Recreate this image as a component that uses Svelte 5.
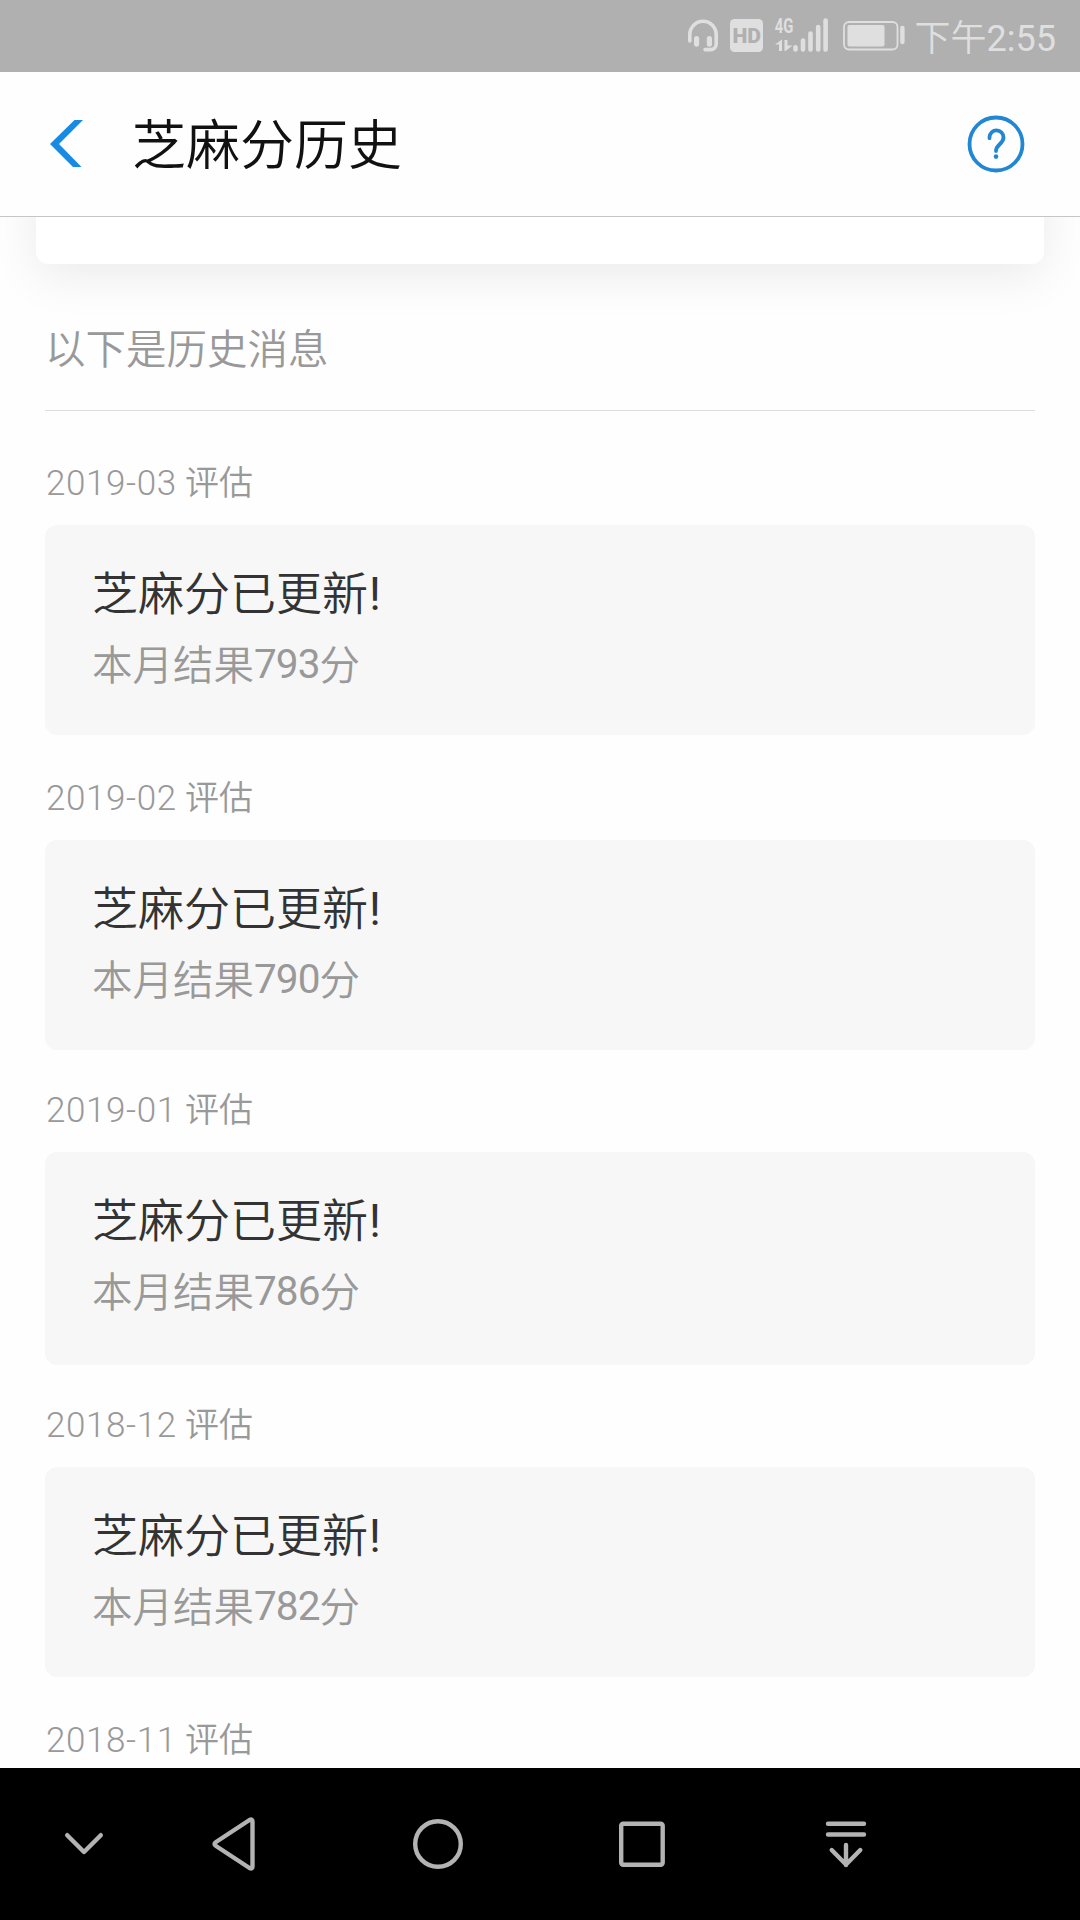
<script>
  const records = [
    { month: '2019-03', score: 793 },
    { month: '2019-02', score: 790 },
    { month: '2019-01', score: 786, tight: true, tall: true },
    { month: '2018-12', score: 782, tight: true },
    { month: '2018-11', score: null }
  ];
</script>

<svelte:head><title>芝麻分历史</title></svelte:head>

<div class="screen">
  <div class="status-bar">
    <svg class="status-icons" width="220" height="40" viewBox="0 0 220 40">
      <!-- headset -->
      <g fill="none" stroke="#dfdfdf" stroke-width="3.6" stroke-linecap="round">
        <path d="M4.8 25V18.5a13.2 13.2 0 0 1 26.4 0V28a5.6 5.6 0 0 1-5.6 5.6H20" />
        <path d="M11.6 22.5v5.6M24.4 22.5v5.6" stroke-width="5.2" />
      </g>
      <rect x="45" y="3" width="33" height="33" rx="4.5" fill="#dfdfdf" />
      <text class="hd" x="47.5" y="27" textLength="28.5" lengthAdjust="spacingAndGlyphs">HD</text>
      <text class="net" x="89.8" y="16.6" textLength="18.6" lengthAdjust="spacingAndGlyphs">4G</text>
      <!-- up / down traffic -->
      <path d="M97 23.5V35h-3v-6.5h-4zM99.500 24h3v5.500h5l-7 5.500h-1z" fill="#dfdfdf" />
      <g stroke="#dfdfdf" stroke-width="4.6" stroke-linecap="round">
        <path d="M110.500 31.200v2.300M118 24.500v9M125.500 17.500v16M133.200 11v22.500M140.600 4.500v29" />
      </g>
      <rect x="159" y="6" width="53.500" height="27.500" rx="5" fill="none" stroke="#dfdfdf" stroke-width="1.800" />
      <rect x="162.500" y="9" width="37" height="21.500" rx="2" fill="#dfdfdf" />
      <path d="M217.400 12v14" stroke="#dfdfdf" stroke-width="4.4" stroke-linecap="round" />
    </svg>
    <span class="clock">下午<b>2:55</b></span>
  </div>

  <header class="title-bar">
    <svg class="back" width="34" height="48" viewBox="0 0 34 48">
      <path d="M24.500 0H33L9 24 31.500 47H23L0 24z" fill="#178be4" />
    </svg>
    <h1>芝麻分历史</h1>
    <svg class="help" width="60" height="60" viewBox="0 0 60 60" fill="none" stroke="#2187d3" stroke-linecap="round">
      <circle cx="30" cy="30" r="26.500" stroke-width="3.800" />
      <path d="M23.500 24.200v-1a7 7 0 0 1 14 .3c0 3.200-1.400 4.600-4 7-2.400 2.200-3.500 3.500-3.500 6.500" stroke-width="3.800" />
      <circle cx="30" cy="42.600" r="2.300" fill="#2187d3" stroke="none" />
    </svg>
  </header>

  <main>
    <div class="summary-card"></div>
    <p class="intro">以下是历史消息</p>

    {#each records as record}
      <section class="record" class:tight={record.tight}>
        <h2><span>{record.month}</span> 评估</h2>
        {#if record.score}
          <div class="card" class:tall={record.tall}>
            <h3>芝麻分已更新<b>!</b></h3>
            <p>本月结果<b>{record.score}</b>分</p>
          </div>
        {/if}
      </section>
    {/each}
  </main>

  <nav class="nav-bar">
    <svg width="1080" height="152" viewBox="0 0 1080 152" fill="none" stroke="#b3b3b3" stroke-width="4.400" stroke-linecap="round" stroke-linejoin="round">
      <path d="M67.200 67.200 84 84l16.800-16.800" />
      <path d="M252.500 53.500v45q0 3-3 1.500L216 78q-3-2 0-4l33.500-22q3-1.500 3 1.500z" />
      <circle cx="438" cy="76" r="22.800" />
      <rect x="621.200" y="55.700" width="41.500" height="41" rx="2" />
      <path d="M828 55.700h36M828 66.500h36M846 77v20M831.700 82 846 96.500 860.300 82" />
    </svg>
  </nav>
</div>

<style>
  :global(body) {
    background: #fff;
    overflow: hidden;
  }
  .screen {
    display: flex;
    flex-direction: column;
    width: 1080px;
    height: 1920px;
    overflow: hidden;
    background: #fefefe;
    font-family: Roboto, 'Noto Sans CJK SC', sans-serif;
    font-weight: 350;
  }
  h1, h2, h3, p { margin: 0; font-weight: inherit; }
  b { font-weight: 400; }
  svg { display: block; flex: none; overflow: visible; }

  .status-bar {
    display: flex;
    align-items: center;
    justify-content: flex-end;
    flex: none;
    height: 72px;
    padding-right: 24px;
    background: #b0b0b0;
    color: #dfdfdf;
  }
  .status-icons { margin-right: 10px; }
  .hd { font: 900 21px Roboto, sans-serif; fill: #b0b0b0; }
  .net { font: 700 20px Roboto, sans-serif; fill: #dfdfdf; }
  .clock { margin-top: -3px; font-size: 36px; white-space: nowrap; }

  .title-bar {
    display: flex;
    align-items: center;
    flex: none;
    box-sizing: border-box;
    height: 145px;
    padding: 0 54px 0 50px;
    border-bottom: 1px solid #c4c6c6;
  }
  h1 {
    flex: 1;
    margin-left: 48px;
    padding-top: 5px;
    font-size: 54px;
    line-height: 72px;
    color: #111;
  }

  main { flex: 1; min-height: 0; overflow: hidden; padding: 0 45px; }
  .summary-card {
    height: 147px;
    margin: -100px -9px 0;
    border-radius: 12px;
    background: #fff;
    box-shadow: 0 12px 48px rgba(0, 0, 0, .08);
  }
  .intro {
    height: 147px;
    box-sizing: border-box;
    padding-top: 56px;
    border-bottom: 1px solid #ddd;
    font-size: 40.5px;
    line-height: 60px;
    color: #999;
  }

  .record { padding-top: 47px; }
  .record + .record { padding-top: 38px; }
  .record + .record.tight { padding-top: 35px; }
  h2 {
    height: 67px;
    padding-left: 1px;
    font-size: 34px;
    line-height: 50px;
    color: #999;
  }
  h2 span { font-size: 35px; font-weight: 300; letter-spacing: .6px; }
  .card {
    box-sizing: border-box;
    height: 210px;
    padding: 36px 47px;
    border-radius: 12px;
    background: #f7f7f7;
  }
  .card.tall { height: 213px; }
  h3 { font-size: 46px; line-height: 66px; color: #333; }
  h3 b { margin-left: 1px; }
  .card p { margin-top: 9px; font-size: 40.5px; line-height: 60px; color: #999; }
  .card p b {
    font-size: 40.5px;
    line-height: 0;
    letter-spacing: -.9px;
    vertical-align: 2px;
  }

  .nav-bar { flex: none; height: 152px; background: #000; }
</style>
